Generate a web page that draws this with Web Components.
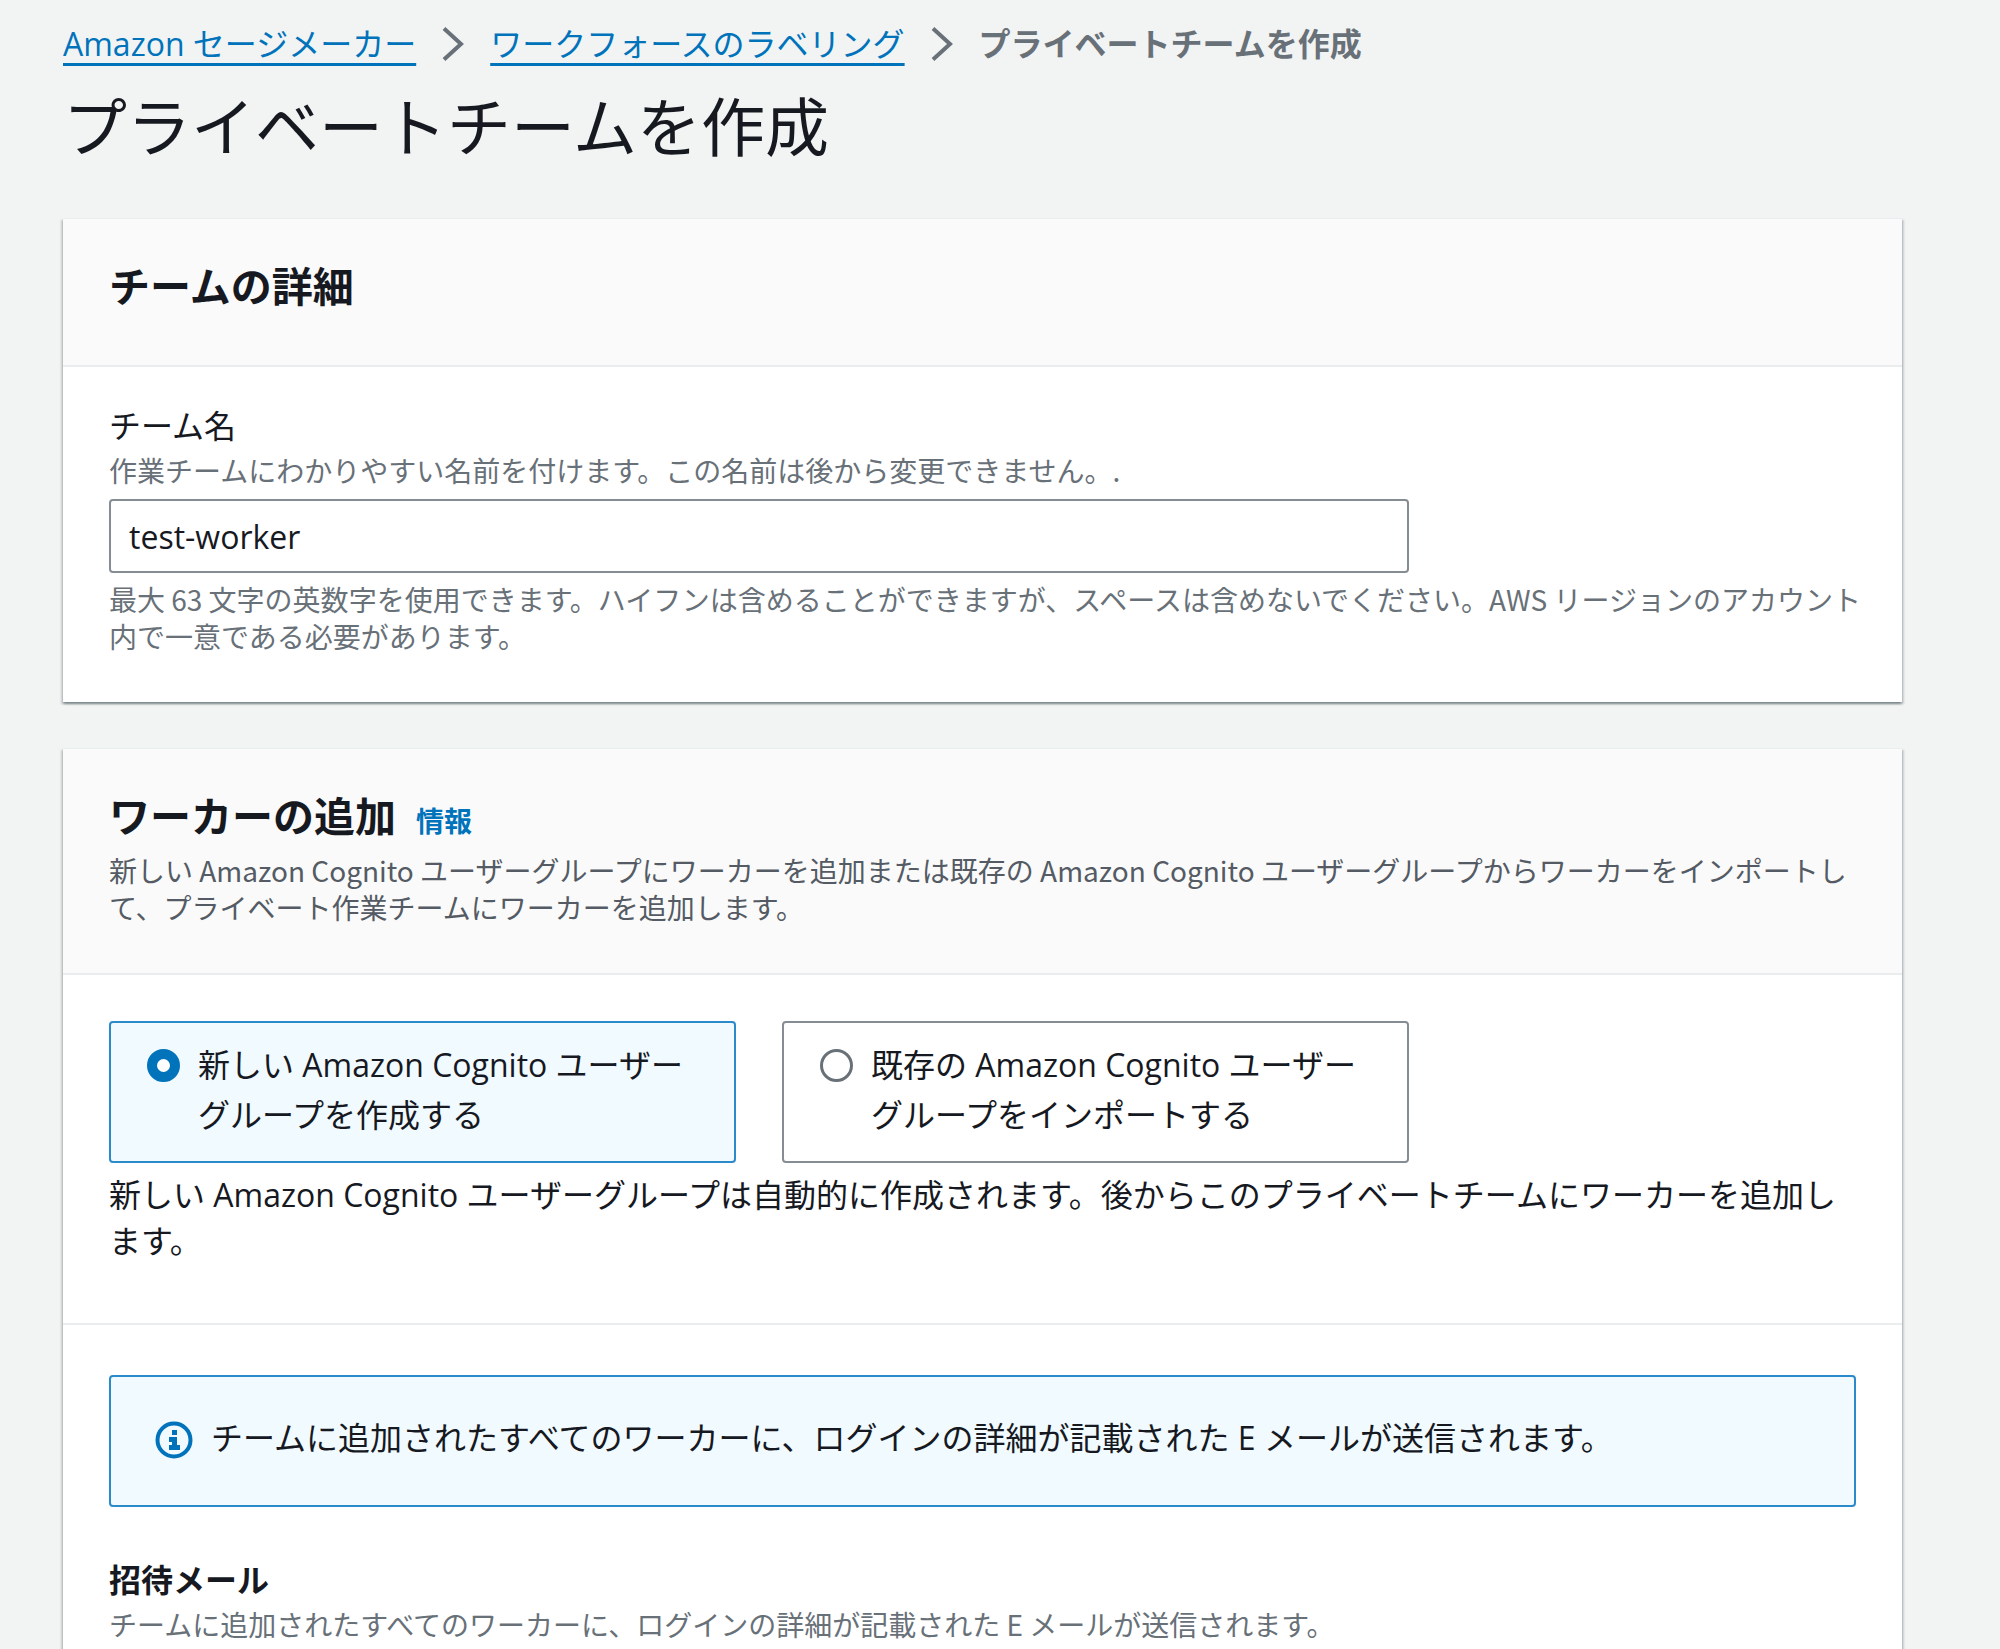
<!DOCTYPE html>
<html lang="ja">
<head>
<meta charset="utf-8">
<meta name="viewport" content="width=device-width, initial-scale=1">
<title>プライベートチームを作成</title>
<style>
  body {
    margin: 0;
    background: #f2f3f3;
    color: #16191f;
    font: 32px/46px "Open Sans", "Noto Sans CJK JP", sans-serif;
    --small-font: "Noto Sans CJK JP", sans-serif;
    --blue: #0073bb;
    --gray: #687078;
    --gutter: 46px;
  }
</style>
</head>
<body>
<team-page></team-page>

<script>
const define = (name, html) => {
  const template = document.createElement('template');
  template.innerHTML = html;
  customElements.define(name, class extends HTMLElement {
    constructor() {
      super();
      this.attachShadow({ mode: 'open' }).append(template.content.cloneNode(true));
    }
  });
};

define('crumb-trail', `
  <style>
    :host { display: block; }
    nav { display: flex; align-items: center; gap: 26px; flex-wrap: wrap; }
    a { color: var(--blue); text-decoration: underline 3px; text-underline-offset: 7px; text-decoration-skip-ink: none; }
    svg { width: 22px; height: 34px; fill: none; stroke: var(--gray); stroke-width: 4; }
    span { color: var(--gray); font-weight: 700; }
  </style>
  <nav aria-label="パンくずリスト">
    <a href="#sagemaker">Amazon セージメーカー</a>
    <svg viewBox="0 0 22 34" aria-hidden="true"><path d="M2 1.500L19 17L2 32.500"/></svg>
    <a href="#workforces">ワークフォースのラベリング</a>
    <svg viewBox="0 0 22 34" aria-hidden="true"><path d="M2 1.500L19 17L2 32.500"/></svg>
    <span aria-current="page">プライベートチームを作成</span>
  </nav>`);

define('form-panel', `
  <style>
    :host {
      display: block;
      background: #fff;
      border-top: 1px solid #eaeded;
      box-shadow: 0 2px 2px rgba(0,28,36,.3), 2px 2px 2px rgba(0,28,36,.15), -2px 2px 2px rgba(0,28,36,.15);
    }
    header { background: #fafafa; border-bottom: 2px solid #eaeded; padding: 42px var(--gutter) 43px; }
    .title { display: flex; align-items: baseline; gap: 20px; padding-bottom: 11px; }
    ::slotted(h2) { margin: 0; font-size: 41px; line-height: 50px; font-weight: 700; }
    ::slotted(a) { color: var(--blue); font: 700 28px/37px var(--small-font); text-decoration: none; }
    ::slotted(p) { margin: 0 0 4px; color: #545b64; font: 28px/37px var(--small-font); }
  </style>
  <header>
    <div class="title"><slot name="title"></slot><slot name="info"></slot></div>
    <slot name="description"></slot>
  </header>
  <slot></slot>`);

define('panel-section', `
  <style>
    :host { display: block; padding: 36px var(--gutter) 47px; }
    :host(:not(:first-of-type)) { border-top: 2px solid #eaeded; padding-top: 50px; }
  </style>
  <slot></slot>`);

define('text-field', `
  <style>
    :host { display: block; }
    label { display: block; padding-bottom: 3px; }
    p { margin: 0; color: var(--gray); font: 28px/37px var(--small-font); }
    input {
      display: block; box-sizing: border-box; width: 100%; max-width: 1300px; height: 74px;
      margin: 10px 0 8px; padding: 0 18px;
      border: 2px solid #868c93; border-radius: 4px; background: #fff;
      color: inherit; font: inherit;
    }
    .hint { margin-right: -24px; }
  </style>
  <label for="name">チーム名</label>
  <p id="about">作業チームにわかりやすい名前を付けます。この名前は後から変更できません。.</p>
  <input id="name" type="text" value="test-worker" aria-describedby="about rule">
  <p class="hint" id="rule">最大 63 文字の英数字を使用できます。ハイフンは含めることができますが、スペースは含めないでください。AWS リージョンのアカウント内で一意である必要があります。</p>`);

define('group-choice', `
  <style>
    :host { display: block; padding: 10px 0 12px; }
    fieldset { display: grid; grid-template-columns: 1fr 1fr; gap: 46px; max-width: 1300px; margin: 0; padding: 0; border: 0; min-width: 0; }
    label {
      display: flex; gap: 18px; align-items: flex-start; box-sizing: border-box;
      padding: 17px 30px 21px 36px; border: 2px solid #868c93; border-radius: 4px;
      line-height: 50px;
    }
    label:has(:checked) { border-color: #2b8aca; background: #f1faff; }
    input {
      appearance: none; flex: none; box-sizing: border-box; width: 33px; height: 33px;
      margin: 9px 0 0; border: 3px solid var(--gray); border-radius: 50%; background: #fff;
    }
    input:checked { border: 10px solid var(--blue); }
    p { margin: 9px 0 0; }
  </style>
  <fieldset aria-label="ユーザーグループ">
    <label><input type="radio" name="group" checked><span>新しい Amazon Cognito ユーザーグループを作成する</span></label>
    <label><input type="radio" name="group"><span>既存の Amazon Cognito ユーザーグループをインポートする</span></label>
  </fieldset>
  <p>新しい Amazon Cognito ユーザーグループは自動的に作成されます。後からこのプライベートチームにワーカーを追加します。</p>`);

define('info-alert', `
  <style>
    :host {
      display: flex; gap: 18px; align-items: flex-start; box-sizing: border-box; min-height: 132px;
      padding: 38px 44px; border: 2px solid #2b8aca; border-radius: 4px; background: #f1faff;
    }
    svg { flex: none; width: 38px; height: 38px; margin-top: 6px; }
  </style>
  <svg viewBox="0 0 38 38" aria-hidden="true">
    <circle cx="19" cy="19" r="16.500" fill="none" stroke="#0073bb" stroke-width="4"/>
    <path fill="#0073bb" d="M17 9h5v5h-5zM14 16h8v8h3v5H14v-5h3v-3h-3z"/>
  </svg>
  <span><slot></slot></span>`);

define('mail-heading', `
  <style>
    :host { display: block; padding-top: 50px; }
    h3 { margin: 0 0 3px; font-size: 32px; line-height: 46px; font-weight: 700; }
    p { margin: 0; color: var(--gray); font: 28px/37px var(--small-font); }
  </style>
  <h3>招待メール</h3>
  <p>チームに追加されたすべてのワーカーに、ログインの詳細が記載された E メールが送信されます。</p>`);

define('team-page', `
  <style>
    :host { display: block; padding: 21px 98px 0 63px; }
    h1 { margin: 20px 0 51px; font-size: 64px; line-height: 80px; font-weight: 400; }
    main { display: flex; flex-direction: column; gap: 46px; }
  </style>
  <crumb-trail></crumb-trail>
  <h1>プライベートチームを作成</h1>
  <main>
    <form-panel>
      <h2 slot="title">チームの詳細</h2>
      <panel-section><text-field></text-field></panel-section>
    </form-panel>
    <form-panel>
      <h2 slot="title">ワーカーの追加</h2>
      <a slot="info" href="#info">情報</a>
      <p slot="description">新しい Amazon Cognito ユーザーグループにワーカーを追加または既存の Amazon Cognito ユーザーグループからワーカーをインポートして、プライベート作業チームにワーカーを追加します。</p>
      <panel-section><group-choice></group-choice></panel-section>
      <panel-section>
        <info-alert>チームに追加されたすべてのワーカーに、ログインの詳細が記載された E メールが送信されます。</info-alert>
        <mail-heading></mail-heading>
      </panel-section>
    </form-panel>
  </main>`);
</script>
</body>
</html>
